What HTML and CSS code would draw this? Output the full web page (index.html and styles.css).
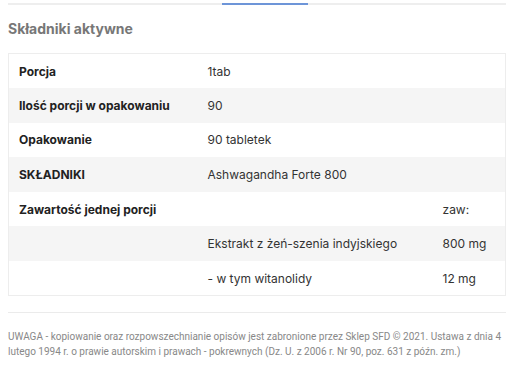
FILE: index.html
```html
<!DOCTYPE html>
<html lang="pl">
<head>
<meta charset="utf-8">
<title>Składniki aktywne</title>
<link rel="stylesheet" href="styles.css">
</head>
<body>
<div class="page">
  <div class="tabs-line"><span class="tab-active"></span></div>
  <h2 class="heading">Składniki aktywne</h2>
  <table class="facts">
    <tr><th>Porcja</th><td>1tab</td><td></td></tr>
    <tr><th>Ilość porcji w opakowaniu</th><td>90</td><td></td></tr>
    <tr><th>Opakowanie</th><td>90 tabletek</td><td></td></tr>
    <tr><th>SKŁADNIKI</th><td>Ashwagandha Forte 800</td><td></td></tr>
    <tr><th>Zawartość jednej porcji</th><td></td><td>zaw:</td></tr>
    <tr><th></th><td>Ekstrakt z żeń-szenia indyjskiego</td><td>800 mg</td></tr>
    <tr><th></th><td>- w tym witanolidy</td><td>12 mg</td></tr>
  </table>
  <p class="notice">UWAGA - kopiowanie oraz rozpowszechnianie opisów jest zabronione przez Sklep SFD © 2021. Ustawa z dnia 4 lutego 1994 r. o prawie autorskim i prawach - pokrewnych (Dz. U. z 2006 r. Nr 90, poz. 631 z późn. zm.)</p>
</div>
</body>
</html>
```
FILE: styles.css
```css
* { box-sizing: border-box; }
html, body { margin: 0; padding: 0; background: #fff; }
body { font-family: Inter, "Noto Sans", sans-serif; color: #222; }
.page { padding: 3px 6px 0 8px; }
.tabs-line { height: 2px; background: #eeeeee; position: relative; }
.tab-active { position: absolute; left: 214px; width: 86px; top: 0; height: 2px; background: #6d95d8; }
.heading { margin: 15px 0 0 0; font-size: 14px; font-weight: 700; color: #777; line-height: 17px; }
.facts { margin-top: 16px; width: 100%; border-collapse: collapse; border: 1px solid #ededed; font-size: 12px; }
.facts tr { height: 34.6px; }
.facts tr:nth-child(even) { background: #f5f5f5; }
.facts th, .facts td { text-align: left; padding: 0 10px; vertical-align: middle; }
.facts th { width: 189px; font-weight: 700; color: #222; }
.facts td { font-weight: 400; color: #333; }
.facts td:last-child { width: 73px; }
.notice { margin: 16px 0 0 0; padding-top: 16px; border-top: 1px solid #ebebeb; font-family: "Roboto", sans-serif; font-size: 10px; line-height: 15px; color: #888; }
```
